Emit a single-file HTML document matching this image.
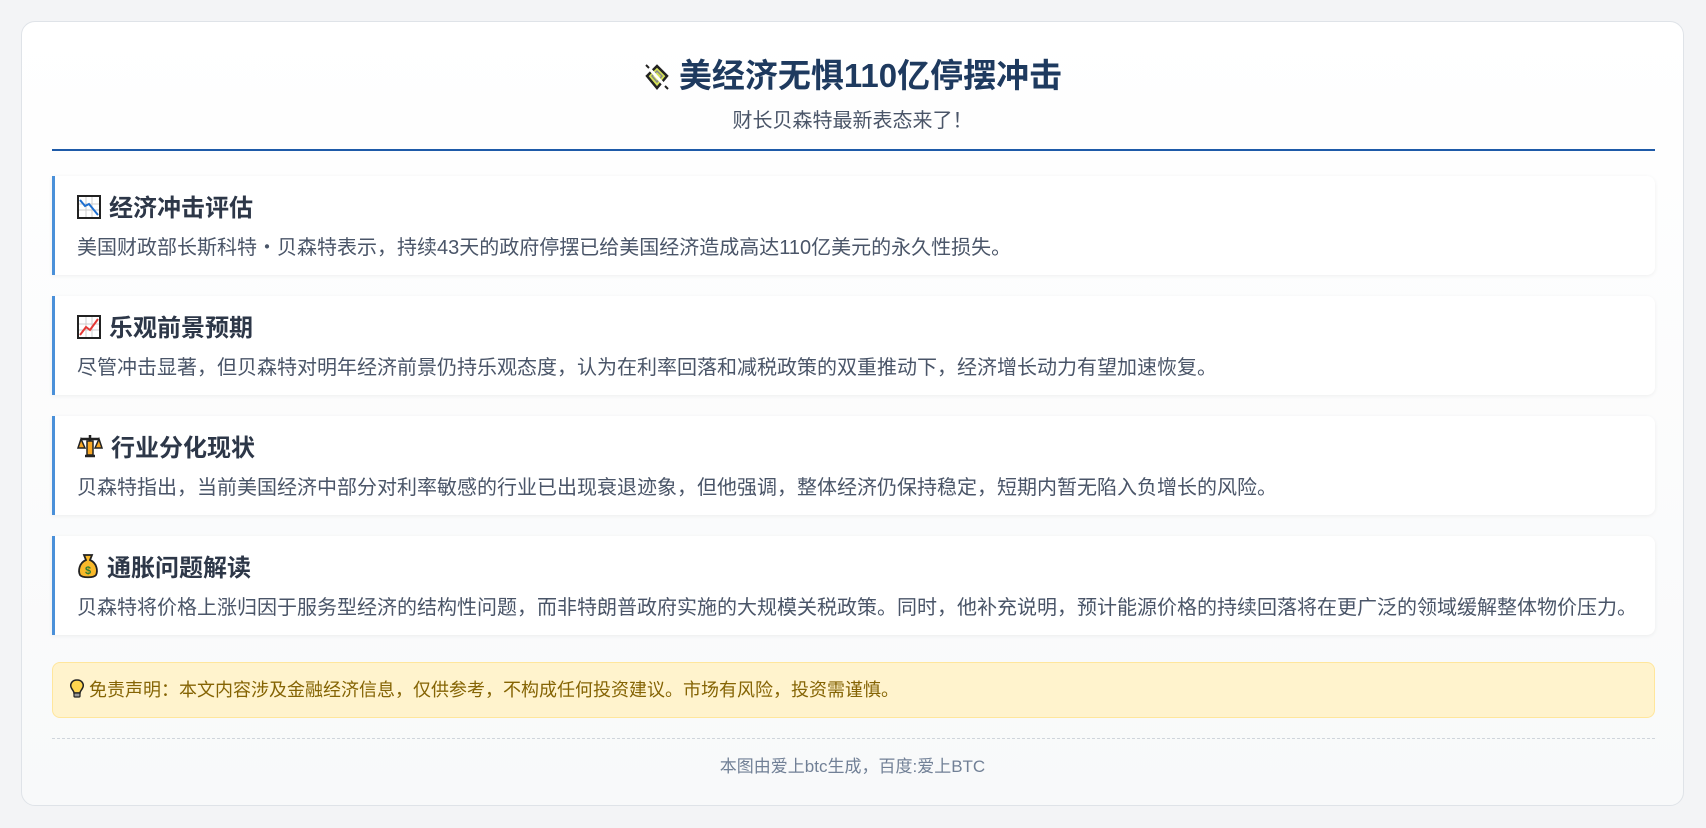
<!DOCTYPE html>
<html><head><meta charset="utf-8"><style>
*{margin:0;padding:0;box-sizing:border-box}
body{width:1706px;height:828px;background:#f3f4f6;font-family:"Liberation Sans","Noto Sans CJK SC",sans-serif;position:relative;overflow:hidden}
.card{position:absolute;left:21px;top:21px;width:1663px;height:785px;background:linear-gradient(#fff,#f8f9fa);border:1px solid #dfe3e8;border-radius:14px}
.title{position:absolute;left:0;right:0;top:33px;text-align:center;font-size:33px;font-weight:bold;color:#1e3a5f;line-height:42px}
.title svg{vertical-align:-5px;margin-right:8px}
.sub{position:absolute;left:0;right:0;top:85px;text-align:center;font-size:20px;color:#4a5568;line-height:28px}
.hr{position:absolute;left:30px;width:1603px;top:127px;height:2px;background:#1e5aa8}
.sec{position:absolute;left:30px;width:1603px;height:99px;background:#fff;border-left:3px solid #4a90d9;border-radius:0 8px 8px 0;box-shadow:0 1px 4px rgba(0,0,0,.06);padding:16px 0 0 22px}
.sec h3{font-size:24px;font-weight:bold;color:#2d3748;line-height:34px;height:34px}
.sec h3 svg{vertical-align:-3px;margin-right:8px}
.sec p{font-size:20px;color:#4a5568;line-height:30px;margin-top:7px;white-space:nowrap}
.disc{position:absolute;left:30px;width:1603px;top:640px;height:56px;background:#fff3cd;border:1px solid #ffe69c;border-radius:8px;padding:0 0 0 16px;font-size:18px;color:#856404;line-height:54px}
.disc svg{vertical-align:-3px;margin-right:4px}
.dash{position:absolute;left:30px;width:1603px;top:716px;border-top:1px dashed #cfd5dc}
.foot{position:absolute;left:0;right:0;top:733px;text-align:center;font-size:17px;color:#718096;line-height:24px}
</style></head><body>
<div class="card">
<div class="title"><svg width="28" height="30" viewBox="0 0 28 30"><path d="M4 14 L14 4 L24 14 L14 26 Z" fill="#d4e157" stroke="#222" stroke-width="2.5"/><path d="M9 14 L14 9 L19 14 L14 20 Z" fill="none" stroke="#888" stroke-width="1.5"/><path d="M4 4 L24 26" stroke="#fff" stroke-width="3"/><path d="M3 3 L6 6 M22 24 L25 27" stroke="#222" stroke-width="2"/></svg>美经济无惧110亿停摆冲击</div>
<div class="sub">财长贝森特最新表态来了！</div>
<div class="hr"></div>

<div class="sec" style="top:154px"><h3><svg width="24" height="24" viewBox="0 0 24 24"><rect x="1" y="1" width="22" height="22" fill="#fff" stroke="#222" stroke-width="2"/><path d="M2 9H22M2 15H22M9 2V22M15 2V22" stroke="#ccc"/><path d="M3 5 L8 11 L12 9 L21 20" stroke="#1e6fd0" stroke-width="2" fill="none"/></svg>经济冲击评估</h3><p>美国财政部长斯科特・贝森特表示，持续43天的政府停摆已给美国经济造成高达110亿美元的永久性损失。</p></div>

<div class="sec" style="top:274px"><h3><svg width="24" height="24" viewBox="0 0 24 24"><rect x="1" y="1" width="22" height="22" fill="#fff" stroke="#222" stroke-width="2"/><path d="M2 9H22M2 15H22M9 2V22M15 2V22" stroke="#ccc"/><path d="M3 20 L9 12 L13 15 L21 4" stroke="#e53935" stroke-width="2" fill="none"/></svg>乐观前景预期</h3><p>尽管冲击显著，但贝森特对明年经济前景仍持乐观态度，认为在利率回落和减税政策的双重推动下，经济增长动力有望加速恢复。</p></div>

<div class="sec" style="top:394px"><h3><svg width="26" height="26" viewBox="0 0 26 26"><path d="M13 2V23M4 6H22M8 23H18" stroke="#222" stroke-width="2.5"/><path d="M1 15 L4 6 L8 15 Z M18 15 L22 6 L25 15 Z" fill="#f9a825" stroke="#222" stroke-width="1.5"/><rect x="10" y="8" width="6" height="14" fill="#f9a825" stroke="#222" stroke-width="1.5"/></svg>行业分化现状</h3><p>贝森特指出，当前美国经济中部分对利率敏感的行业已出现衰退迹象，但他强调，整体经济仍保持稳定，短期内暂无陷入负增长的风险。</p></div>

<div class="sec" style="top:514px"><h3><svg width="22" height="26" viewBox="0 0 22 26"><path d="M7 2H15L13 7C20 10 21 18 19 22C17 25 5 25 3 22C1 18 2 10 9 7Z" fill="#f9b92a" stroke="#222" stroke-width="1.8"/><text x="11" y="21" font-size="11" font-family="Liberation Sans" font-weight="bold" fill="#2e7d32" text-anchor="middle">$</text></svg>通胀问题解读</h3><p>贝森特将价格上涨归因于服务型经济的结构性问题，而非特朗普政府实施的大规模关税政策。同时，他补充说明，预计能源价格的持续回落将在更广泛的领域缓解整体物价压力。</p></div>

<div class="disc"><svg width="16" height="20" viewBox="0 0 16 20"><path d="M8 1C3 1 1 5 2 8C3 11 5 12 5 14H11C11 12 13 11 14 8C15 5 13 1 8 1Z" fill="#ffd54f" stroke="#222" stroke-width="1.5"/><rect x="5" y="14" width="6" height="4" rx="1" fill="#999" stroke="#222" stroke-width="1.2"/></svg>免责声明：本文内容涉及金融经济信息，仅供参考，不构成任何投资建议。市场有风险，投资需谨慎。</div>
<div class="dash"></div>
<div class="foot">本图由爱上btc生成，百度:爱上BTC</div>
</div>
</body></html>
